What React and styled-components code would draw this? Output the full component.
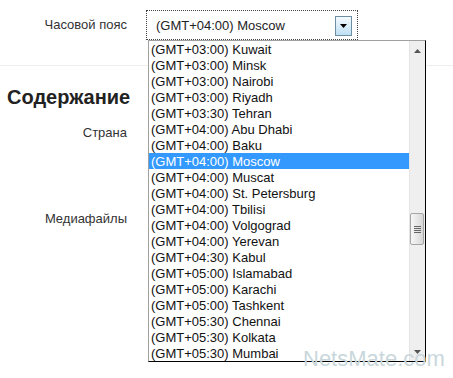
import React from "react";
import styled, { createGlobalStyle } from "styled-components";

const GlobalStyle = createGlobalStyle`
  html, body { margin: 0; padding: 0; background: #fff; }
  body { font-family: "Liberation Sans", Arial, sans-serif; }
`;

const Page = styled.div`
  position: relative;
  width: 453px;
  height: 378px;
  overflow: hidden;
  background: #fff;
  color: #333;
`;

const TopSection = styled.div`
  padding-top: 10px;
  height: 55px;
  border-bottom: 1px solid #eeeeee;
`;

const FormRow = styled.div`
  display: grid;
  grid-template-columns: 127px 1fr;
  column-gap: 19px;
  align-items: center;
  margin-top: ${(p) => p.$top || 0}px;
`;

const Label = styled.div`
  text-align: right;
  font-size: 13px;
  line-height: 16px;
  color: #333;
`;

const SelectBox = styled.div`
  width: 212px;
  height: 30px;
  box-sizing: border-box;
  border: 1px dotted #444;
  display: flex;
  align-items: center;
  justify-content: space-between;
  padding: 0 5px 0 9px;
  font-size: 13px;
  color: #222;
`;

const ArrowButton = styled.div`
  width: 17px;
  height: 20px;
  box-sizing: border-box;
  border: 1px solid #6d8ea3;
  background: linear-gradient(#f4fafd, #bfe0f4);
  display: flex;
  align-items: center;
  justify-content: center;
  margin-top: 1px;
`;

const Content = styled.div`
  padding-top: 19px;
`;

const Heading = styled.h2`
  margin: 0 0 0 7px;
  font-size: 20px;
  line-height: 24px;
  font-weight: bold;
  color: #222;
`;

const Dropdown = styled.div`
  position: absolute;
  left: 148px;
  top: 40px;
  width: 278px;
  height: 322px;
  box-sizing: border-box;
  border-left: 1px solid #a0a0a0;
  border-top: 1px solid #a0a0a0;
  border-right: 1px solid #000;
  border-bottom: 1px solid #000;
  background: #fff;
  display: flex;
`;

const List = styled.div`
  flex: 1;
  display: flex;
  flex-direction: column;
`;

const Option = styled.div`
  height: 16px;
  line-height: 17px;
  font-size: 13px;
  padding-left: 2px;
  color: ${(p) => (p.$selected ? "#fff" : "#111")};
  background: ${(p) => (p.$selected ? "#3399ff" : "transparent")};
  white-space: nowrap;
`;

const Scrollbar = styled.div`
  width: 16px;
  background: #efefef;
  border-left: 1px solid #e4e4e4;
  box-sizing: border-box;
  display: flex;
  flex-direction: column;
  align-items: center;
  position: relative;
`;

const ScrollArrow = styled.div`
  height: 19px;
  width: 100%;
  display: flex;
  align-items: center;
  justify-content: center;
`;

const Thumb = styled.div`
  position: absolute;
  left: 0;
  top: 172px;
  width: 14px;
  height: 32px;
  box-sizing: border-box;
  border: 1px solid #a5a5a5;
  border-radius: 2px;
  background: linear-gradient(90deg, #f6f6f6, #e4e4e4 60%, #d6d6d6);
  display: flex;
  flex-direction: column;
  align-items: center;
  justify-content: center;
  gap: 1px;
`;

const Grip = styled.div`
  width: 7px;
  height: 1px;
  background: #666;
`;

const Watermark = styled.div`
  position: absolute;
  left: 303px;
  top: 346px;
  font-size: 22px;
  line-height: 26px;
  color: #c9d7dc;
  font-family: "Liberation Sans", Arial, sans-serif;
  pointer-events: none;
`;

const options = [
  "(GMT+03:00) Kuwait",
  "(GMT+03:00) Minsk",
  "(GMT+03:00) Nairobi",
  "(GMT+03:00) Riyadh",
  "(GMT+03:30) Tehran",
  "(GMT+04:00) Abu Dhabi",
  "(GMT+04:00) Baku",
  "(GMT+04:00) Moscow",
  "(GMT+04:00) Muscat",
  "(GMT+04:00) St. Petersburg",
  "(GMT+04:00) Tbilisi",
  "(GMT+04:00) Volgograd",
  "(GMT+04:00) Yerevan",
  "(GMT+04:30) Kabul",
  "(GMT+05:00) Islamabad",
  "(GMT+05:00) Karachi",
  "(GMT+05:00) Tashkent",
  "(GMT+05:30) Chennai",
  "(GMT+05:30) Kolkata",
  "(GMT+05:30) Mumbai",
];

export default function App() {
  return (
    <Page>
      <GlobalStyle />
      <TopSection>
        <FormRow>
          <Label>Часовой пояс</Label>
          <SelectBox>
            <span>(GMT+04:00) Moscow</span>
            <ArrowButton>
              <svg width="7" height="4" viewBox="0 0 7 4">
                <path d="M0 0H7L3.5 4Z" fill="#000" />
              </svg>
            </ArrowButton>
          </SelectBox>
        </FormRow>
      </TopSection>
      <Content>
        <Heading>Содержание</Heading>
        <FormRow $top={16}>
          <Label>Страна</Label>
          <div />
        </FormRow>
        <FormRow $top={70}>
          <Label>Медиафайлы</Label>
          <div />
        </FormRow>
      </Content>

      <Dropdown>
        <List>
          {options.map((o) => (
            <Option key={o} $selected={o === "(GMT+04:00) Moscow"}>
              {o}
            </Option>
          ))}
        </List>
        <Scrollbar>
          <ScrollArrow>
            <svg width="7" height="4" viewBox="0 0 7 4">
              <path d="M3.5 0L7 4H0Z" fill="#555" />
            </svg>
          </ScrollArrow>
          <Thumb>
            <Grip />
            <Grip />
            <Grip />
            <Grip />
          </Thumb>
          <div style={{ flex: 1 }} />
          <ScrollArrow>
            <svg width="7" height="4" viewBox="0 0 7 4">
              <path d="M0 0H7L3.5 4Z" fill="#555" />
            </svg>
          </ScrollArrow>
        </Scrollbar>
      </Dropdown>

      <Watermark>NetsMate.com</Watermark>
    </Page>
  );
}
